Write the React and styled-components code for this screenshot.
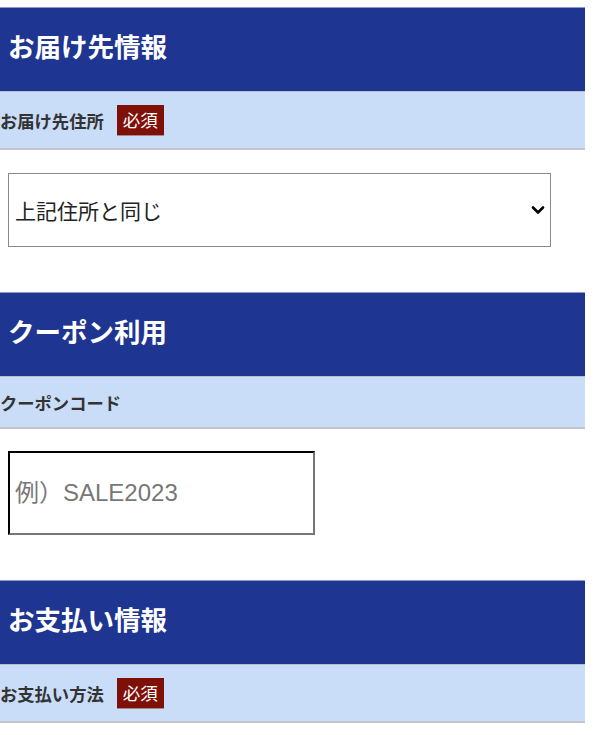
import React from "react";
import styled, { createGlobalStyle } from "styled-components";

const Global = createGlobalStyle`
  html, body { margin: 0; padding: 0; background: #fff; }
  body { font-family: "Liberation Sans", "Noto Sans CJK JP", sans-serif; }
  * { box-sizing: border-box; }
`;

const Page = styled.div`
  width: 585px;
  padding-top: 7px;
`;

const Section = styled.section`
  display: flex;
  flex-direction: column;
`;

const Heading = styled.h2`
  margin: 0;
  height: 84px;
  border-top: 1px solid #8f97c8;
  background: #1f3592;
  color: #fff;
  font-size: 26.5px;
  font-weight: 700;
  display: flex;
  align-items: center;
  padding: 0 0 9px 8px;
`;

const LabelBar = styled.div`
  height: ${(p) => (p.$badge ? 59 : 53)}px;
  background: #c9ddf8;
  border-top: 1px solid #b9bfca;
  border-bottom: 2px solid #c4c6cb;
  display: flex;
  align-items: center;
  gap: 13px;
  font-size: 17.3px;
  font-weight: 700;
  color: #333;
`;

const Badge = styled.span`
  background: #7f1007;
  color: #fff;
  font-size: 17.5px;
  font-weight: 400;
  height: 31px;
  padding: 0 6px;
  display: inline-flex;
  align-items: center;
  border-bottom: 1px solid #a58a8a;
`;

const Field = styled.div`
  padding: ${(p) => p.$pad};
`;

const SelectBox = styled.div`
  width: 543px;
  height: 74px;
  margin-left: 8px;
  border: 1px solid #8a8a8a;
  display: flex;
  align-items: center;
  justify-content: space-between;
  padding: 0 5px 0 6px;
  font-size: 21px;
  color: #222;
`;

const Input = styled.input`
  display: block;
  width: 307px;
  height: 84px;
  margin-left: 8px;
  border: 2px inset #767676;
  border-top-color: #111;
  border-left-color: #111;
  padding: 0 5px;
  font-family: inherit;
  font-size: 24px;
  outline: none;
  &::placeholder { color: #777; }
`;

const Chevron = () => (
  <svg width="14" height="10" viewBox="0 0 14 10">
    <path d="M2 2.5 L7 7.5 L12 2.5" fill="none" stroke="#000" strokeWidth="2.6" strokeLinecap="round" strokeLinejoin="round" />
  </svg>
);

export default function App() {
  return (
    <>
      <Global />
      <Page>
        <Section>
          <Heading>お届け先情報</Heading>
          <LabelBar $badge>
            お届け先住所<Badge>必須</Badge>
          </LabelBar>
          <Field $pad="23px 0 45px">
            <SelectBox>
              <span>上記住所と同じ</span>
              <Chevron />
            </SelectBox>
          </Field>
        </Section>
        <Section>
          <Heading>クーポン利用</Heading>
          <LabelBar>クーポンコード</LabelBar>
          <Field $pad="22px 0 45px">
            <Input placeholder="例）SALE2023" />
          </Field>
        </Section>
        <Section>
          <Heading>お支払い情報</Heading>
          <LabelBar $badge>
            お支払い方法<Badge>必須</Badge>
          </LabelBar>
        </Section>
      </Page>
    </>
  );
}
